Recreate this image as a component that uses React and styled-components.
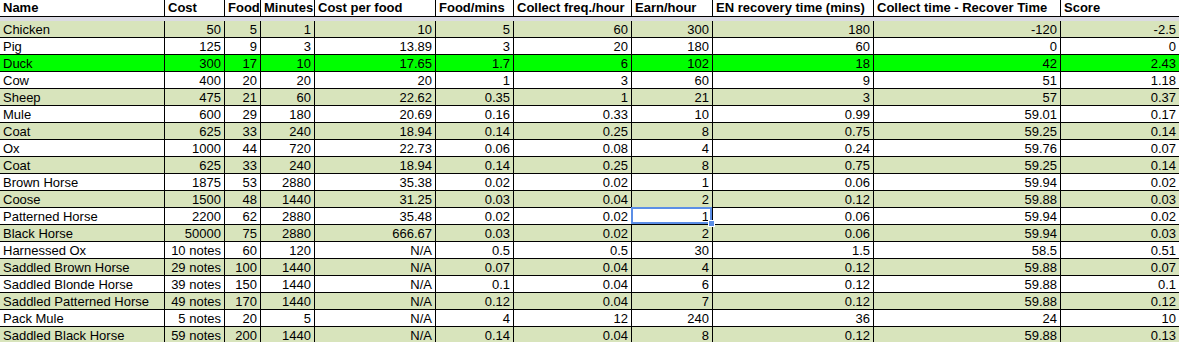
import React from 'react'
import styled, { createGlobalStyle } from 'styled-components'

const GlobalStyle = createGlobalStyle`
  html, body {
    margin: 0;
    background: #fff;
    overflow: hidden;
  }
  body {
    font-family: "Liberation Sans", Arial, sans-serif;
    font-size: 13px;
    color: #000;
  }
`

const COLUMNS = '165px 60px 36px 54px 121px 78px 118px 81px 161px 187px 1fr'

const Sheet = styled.div`
  width: 1179px;
  display: flex;
  flex-direction: column;
`

const Row = styled.div`
  display: grid;
  grid-template-columns: ${COLUMNS};
  height: 17px;
  background: ${({ $tone }) =>
    $tone === 'hot' ? '#00ff00' : $tone === 'band' ? '#d8e4bc' : '#fff'};
`

const Band = styled.div`
  height: 4px;
  background: #dbdbe3;
`

const Cell = styled.div`
  box-sizing: border-box;
  position: relative;
  border-right: ${({ $last }) => ($last ? 'none' : '1px solid #000')};
  border-bottom: 1px solid #000;
  padding: ${({ $head }) => ($head ? '0 3px 0 3px' : '2px 3px 0 3px')};
  line-height: ${({ $head }) => ($head ? '15px' : '14px')};
  font-weight: ${({ $head }) => ($head ? 'bold' : 'normal')};
  text-align: ${({ $align }) => $align || 'left'};
  white-space: nowrap;
  overflow: ${({ $selected }) => ($selected ? 'visible' : 'hidden')};

  ${({ $selected }) =>
    $selected &&
    `
    &::after {
      content: '';
      position: absolute;
      top: -1px;
      left: -1px;
      right: 0;
      bottom: 0;
      border: 2px solid #5b8ee6;
      pointer-events: none;
    }
    &::before {
      content: '';
      position: absolute;
      right: -3px;
      bottom: -3px;
      width: 5px;
      height: 5px;
      background: #5b8ee6;
      border: 1px solid #fff;
      z-index: 2;
    }
  `}
`

const HEADERS = [
  'Name',
  'Cost',
  'Food',
  'Minutes',
  'Cost per food',
  'Food/mins',
  'Collect freq./hour',
  'Earn/hour',
  'EN recovery time (mins)',
  'Collect time - Recover Time',
  'Score',
]

const ROWS = [
  ['Chicken', '50', '5', '1', '10', '5', '60', '300', '180', '-120', '-2.5'],
  ['Pig', '125', '9', '3', '13.89', '3', '20', '180', '60', '0', '0'],
  ['Duck', '300', '17', '10', '17.65', '1.7', '6', '102', '18', '42', '2.43'],
  ['Cow', '400', '20', '20', '20', '1', '3', '60', '9', '51', '1.18'],
  ['Sheep', '475', '21', '60', '22.62', '0.35', '1', '21', '3', '57', '0.37'],
  ['Mule', '600', '29', '180', '20.69', '0.16', '0.33', '10', '0.99', '59.01', '0.17'],
  ['Coat', '625', '33', '240', '18.94', '0.14', '0.25', '8', '0.75', '59.25', '0.14'],
  ['Ox', '1000', '44', '720', '22.73', '0.06', '0.08', '4', '0.24', '59.76', '0.07'],
  ['Coat', '625', '33', '240', '18.94', '0.14', '0.25', '8', '0.75', '59.25', '0.14'],
  ['Brown Horse', '1875', '53', '2880', '35.38', '0.02', '0.02', '1', '0.06', '59.94', '0.02'],
  ['Coose', '1500', '48', '1440', '31.25', '0.03', '0.04', '2', '0.12', '59.88', '0.03'],
  ['Patterned Horse', '2200', '62', '2880', '35.48', '0.02', '0.02', '1', '0.06', '59.94', '0.02'],
  ['Black Horse', '50000', '75', '2880', '666.67', '0.03', '0.02', '2', '0.06', '59.94', '0.03'],
  ['Harnessed Ox', '10 notes', '60', '120', 'N/A', '0.5', '0.5', '30', '1.5', '58.5', '0.51'],
  ['Saddled Brown Horse', '29 notes', '100', '1440', 'N/A', '0.07', '0.04', '4', '0.12', '59.88', '0.07'],
  ['Saddled Blonde Horse', '39 notes', '150', '1440', 'N/A', '0.1', '0.04', '6', '0.12', '59.88', '0.1'],
  ['Saddled Patterned Horse', '49 notes', '170', '1440', 'N/A', '0.12', '0.04', '7', '0.12', '59.88', '0.12'],
  ['Pack Mule', '5 notes', '20', '5', 'N/A', '4', '12', '240', '36', '24', '10'],
  ['Saddled Black Horse', '59 notes', '200', '1440', 'N/A', '0.14', '0.04', '8', '0.12', '59.88', '0.13'],
]

// selected cell: Earn/hour of Patterned Horse
const SELECTED = { row: 11, col: 7 }

const App = () => {
  return (
    <>
      <GlobalStyle />
      <Sheet>
        <Row>
          {HEADERS.map((h, i) => (
            <Cell key={h} $head $last={i === HEADERS.length - 1}>
              {h}
            </Cell>
          ))}
        </Row>
        <Band />
        {ROWS.map((row, r) => {
          const tone = row[0] === 'Duck' ? 'hot' : r % 2 === 0 ? 'band' : 'plain'
          return (
            <Row key={r} $tone={tone}>
              {row.map((value, c) => (
                <Cell
                  key={c}
                  $align={c === 0 ? 'left' : 'right'}
                  $last={c === row.length - 1}
                  $selected={r === SELECTED.row && c === SELECTED.col}
                >
                  {value}
                </Cell>
              ))}
            </Row>
          )
        })}
      </Sheet>
    </>
  )
}

export default App
